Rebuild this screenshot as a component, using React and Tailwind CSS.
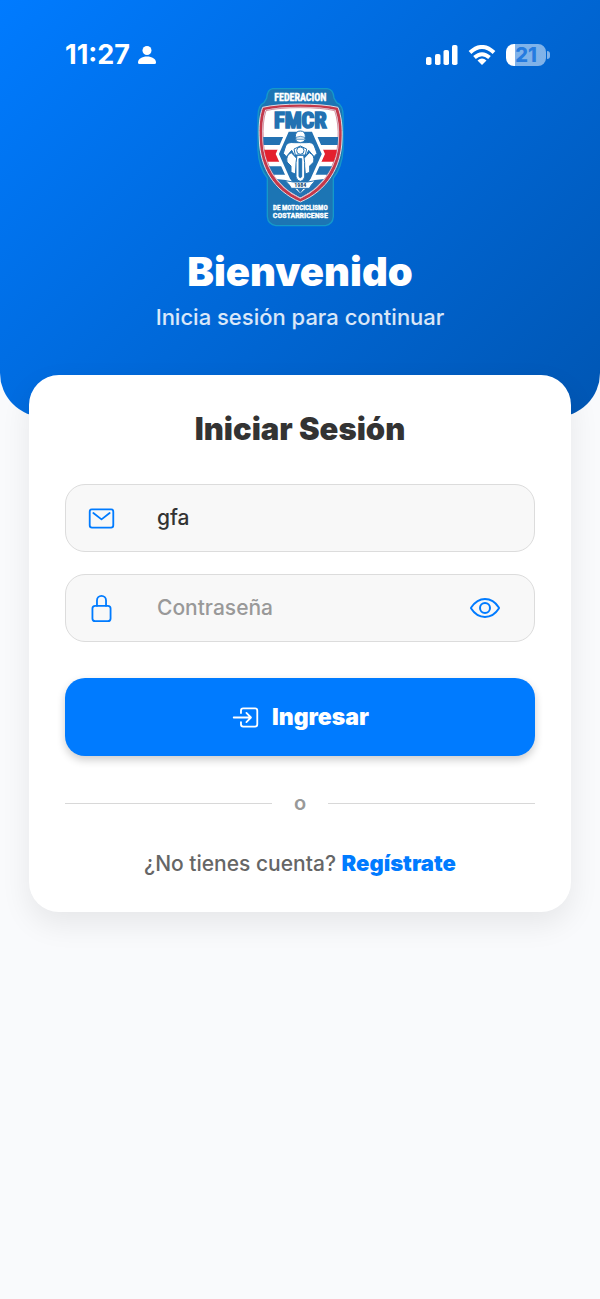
import { useState } from "react";
import { IoEnterOutline, IoEyeOutline, IoLockClosedOutline, IoMailOutline } from "react-icons/io5";

const SHIELD =
  "M68 82 C120 69 240 69 294 82 C304 108 308 140 306 180 C304 260 262 332 181 366 C100 332 60 260 58 180 C56 140 58 108 68 82Z";
const SHIELD_INNER =
  "M78 92 C125 80 236 80 284 92 C292 116 296 145 294 180 C292 250 254 318 181 353 C108 318 72 250 70 180 C68 145 70 116 78 92Z";

function StatusBar() {
  return (
    <div className="flex items-center justify-between pt-[39px] pr-[50px] pl-[65px] text-white">
      <div className="flex h-8 items-center gap-2">
        <span className="text-[27px] font-bold">11:27</span>
        <svg className="h-5 w-[18px]" viewBox="0 0 18 20" fill="currentColor" aria-hidden="true">
          <circle cx="9" cy="5.5" r="4.5" />
          <path d="M0 17.5C0 14 4 11.5 9 11.5S18 14 18 17.5Q18 19 16.5 19H1.5Q0 19 0 17.5Z" />
        </svg>
      </div>
      <div className="flex h-8 items-center gap-2">
        <svg className="h-5 w-8" viewBox="0 0 32 20" fill="currentColor" aria-hidden="true">
          <rect x="0" y="12" width="5.5" height="8" rx="1.8" />
          <rect x="9" y="9" width="5.5" height="11" rx="1.8" />
          <rect x="17.500" y="5" width="5.5" height="15" rx="1.8" />
          <rect x="26" y="0" width="5.500" height="20" rx="1.8" />
        </svg>
        <svg className="h-5 w-8" viewBox="0 0 32 20" aria-hidden="true">
          <g fill="none" stroke="currentColor" strokeWidth="4">
            <path d="M4 7.500Q16 -3.500 28 7.500" />
            <path d="M8.500 12.500Q16 6 23.500 12.500" />
          </g>
          <path d="M11.500 15.500Q16 11.500 20.500 15.500L16 20Z" fill="currentColor" />
        </svg>
        <div className="flex items-center gap-px">
          <div className="flex h-[22px] w-10 items-center justify-center rounded-lg bg-linear-to-r from-white from-22% to-white/50 to-22% text-xl font-extrabold text-[#257be0]">
            21
          </div>
          <div className="h-2 w-[3px] rounded-r-full bg-white/50" />
        </div>
      </div>
    </div>
  );
}

function Logo() {
  return (
    <svg className="h-[141px] w-[87px]" viewBox="51 21 261 423" role="img" aria-label="FMCR">
      <defs>
        <clipPath id="shield">
          <path d={SHIELD_INNER} />
        </clipPath>
      </defs>
      <path
        d="M98 26H262Q280 28 282 54L290 68Q310 76 309 110V210Q306 262 280 294V410Q278 434 256 437H108Q84 434 82 410V294Q56 262 54 210V110Q54 76 72 68L80 54Q82 28 98 26Z"
        fill="#1c75b4"
        stroke="#1599c9"
        strokeWidth="4"
      />
      <path d={SHIELD} fill="#c4384a" stroke="#d9dfe8" strokeWidth="3" />
      <path d={SHIELD_INNER} fill="#fff" stroke="#e8edf4" strokeWidth="6" />
      <path d={SHIELD_INNER} fill="#fff" stroke="#b52c48" strokeWidth="1.500" />
      <g clipPath="url(#shield)">
        <path d="M60 171H310V195H60Z" fill="#2372b2" />
        <path d="M60 209H310V245H60Z" fill="#e4202e" />
        <path d="M60 259H310V284H60Z" fill="#2372b2" />
        <path d="M143 151H219L250 222L215 300L181 347L147 300L112 222Z" fill="#2372b2" stroke="#fff" strokeWidth="9" />
        <path d="M86 286H138L181 345L224 286H276L240 330L181 369L120 330Z" fill="#fff" />
        <path d="M109 297L137 300L181 340L225 300L253 297L222 330L181 353L140 330Z" fill="#2372b2" />
      </g>
      <g fill="#fff" stroke="#2372b2" strokeWidth="3" strokeLinejoin="round">
        <path d="M163 188Q142 185 137 198L130 220L139 230L155 211L163 226L199 226L206 211L222 230L231 220L223 198Q218 185 199 188Z" />
        <path d="M154 218Q137 225 141 246L153 258V277L166 282L171 236ZM208 218Q225 225 221 246L209 258V277L196 282L191 236Z" />
        <path d="M162 207L181 198L200 207L196 225H166Z" />
        <circle cx="181" cy="212" r="11" />
        <path d="M171 226H191L194 248V291Q190 304 181 304Q172 304 168 291V248Z" />
        <path d="M177 236H185V290Q181 296 177 290Z" fill="#2372b2" />
        <path d="M166 170Q166 153 181 153Q196 153 196 170V178Q192 188 181 188Q170 188 166 178Z" />
        <path d="M168 172Q181 166 194 172V178H168Z" fill="#dce9f4" strokeWidth="2" />
        <path d="M136 302L160 306H202L226 302L214 315L208 325H154L148 315Z" />
      </g>
      <g
        textAnchor="middle"
        fontFamily="'Liberation Sans Narrow', 'Roboto Condensed', 'Open Sans Condensed', 'Liberation Sans', sans-serif"
        fontWeight="700"
      >
        <g fill="#fff" stroke="#fff" strokeWidth="1">
          <text x="181" y="63" fontSize="30">FEDERACION</text>
          <text x="181" y="391" fontSize="21">DE MOTOCICLISMO</text>
          <text x="181" y="415" fontSize="24">COSTARRICENSE</text>
        </g>
        <text x="181" y="145" fontSize="67" fill="#2372b2" stroke="#2372b2" strokeWidth="5">FMCR</text>
        <text x="181" y="322" fontSize="18" fill="#17486f">1984</text>
      </g>
    </svg>
  );
}

export default function App() {
  const [user, setUser] = useState("gfa");
  const [password, setPassword] = useState("");
  const [visible, setVisible] = useState(false);

  return (
    <div className="min-h-screen bg-[#f9fafc] font-['Inter',sans-serif]">
      <header className="rounded-b-[44px] bg-linear-[135deg,#007bff,#0056b3] pb-[84px]">
        <StatusBar />
        <div className="mt-4 flex flex-col items-center text-center">
          <Logo />
          <h1 className="mt-5 text-[40px] leading-12 font-black text-white">Bienvenido</h1>
          <p className="mt-[5px] text-[22px] leading-8 font-medium text-white/85">Inicia sesión para continuar</p>
        </div>
      </header>

      <main className="relative mx-[29px] -mt-[42px] rounded-[30px] bg-white px-9 pt-8 pb-8 shadow-[0_12px_30px_rgba(0,0,0,0.08)]">
        <h2 className="text-center text-[31px] leading-11 font-black text-[#333]">Iniciar Sesión</h2>
        <form className="mt-[33px] flex flex-col" onSubmit={(e) => e.preventDefault()}>
          <div className="flex h-[68px] items-center rounded-[20px] border border-[#dcdcdc] bg-[#f8f8f8] px-[21px] text-[#007bff]">
            <label htmlFor="user" aria-label="Usuario">
              <IoMailOutline className="size-[29px]" />
            </label>
            <input
              id="user"
              className="ml-[41px] min-w-0 flex-1 bg-transparent text-[21px] font-medium text-[#333] outline-none"
              value={user}
              onChange={(e) => setUser(e.target.value)}
            />
          </div>
          <div className="mt-[22px] flex h-[68px] items-center rounded-[20px] border border-[#dcdcdc] bg-[#f8f8f8] px-[21px] text-[#007bff]">
            <label htmlFor="password" aria-label="Contraseña">
              <IoLockClosedOutline className="size-[29px]" />
            </label>
            <input
              id="password"
              type={visible ? "text" : "password"}
              placeholder="Contraseña"
              className="ml-[41px] min-w-0 flex-1 bg-transparent text-[21px] font-medium text-[#333] outline-none placeholder:text-[#999]"
              value={password}
              onChange={(e) => setPassword(e.target.value)}
            />
            <button type="button" aria-label="Mostrar contraseña" className="mr-3" onClick={() => setVisible(!visible)}>
              <IoEyeOutline className="size-8" />
            </button>
          </div>
          <button
            type="submit"
            className="mt-9 flex h-[78px] items-center justify-center gap-3 rounded-[20px] bg-[#007bff] text-[23px] font-black text-white shadow-[0_4px_8px_rgba(0,0,0,0.2)]"
          >
            <IoEnterOutline className="size-[29px]" />
            Ingresar
          </button>
        </form>
        <div className="mt-[31px] flex items-center gap-[22px] text-xl leading-8 font-semibold text-[#999]">
          <span className="h-px flex-1 bg-[#d8d8d8]" />
          <span>o</span>
          <span className="h-px flex-1 bg-[#d8d8d8]" />
        </div>
        <p className="mt-7 text-center text-[21px] leading-8 font-medium text-[#666]">
          ¿No tienes cuenta?{" "}
          <a href="#registro" className="text-[22px] font-black text-[#007bff]">
            Regístrate
          </a>
        </p>
      </main>
    </div>
  );
}
